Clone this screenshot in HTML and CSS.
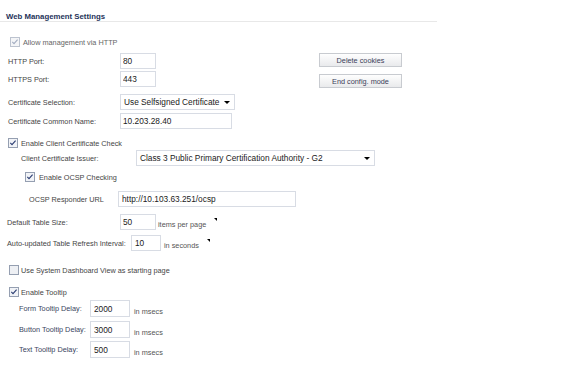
FILE: index.html
```html
<!DOCTYPE html>
<html lang="en">
<head>
  <meta charset="UTF-8" />
  <title>Web Management Settings</title>
  <link rel="stylesheet" href="styles.css">
</head>
<body>
<div class="settings">

  <!-- TITLE -->
  <div class="title">Web Management Settings</div>

  <div class="row check-row mt13 pad10 disabled">
    <svg class="cb" width="10" height="10" viewBox="0 0 10 10"><rect x="0.5" y="0.5" width="9" height="9" fill="#f4f5f7" stroke="#bcc3cf"/><path d="M2.3 4.9 L4 6.6 L7.6 2.6" fill="none" stroke="#a2acc0" stroke-width="1.1"/></svg>
    <span>Allow management via HTTP</span>
  </div>

  <!-- PORTS -->
  <div class="ports mt4">
    <div class="fields">
      <div class="row pad8">
        <span class="lbl w112">HTTP Port:</span>
        <input class="field w-port" value="80" />
      </div>
      <div class="row pad8 mt2">
        <span class="lbl w112">HTTPS Port:</span>
        <input class="field w-port" value="443" />
      </div>
    </div>
    <div class="actions">
      <button class="btn">Delete cookies</button>
      <button class="btn">End config. mode</button>
    </div>
  </div>

  <div class="row pad8 mt6">
    <span class="lbl w112">Certificate Selection:</span>
    <div class="field select w-cert">Use Selfsigned Certificate<span class="arrow"></span></div>
  </div>

  <div class="row pad8 mt3">
    <span class="lbl w112">Certificate Common Name:</span>
    <input class="field w-cn" value="10.203.28.40" />
  </div>

  <!-- CLIENT CERTIFICATE -->
  <div class="row check-row pad8 mt7">
    <svg class="cb" width="10" height="10" viewBox="0 0 10 10"><rect x="0.5" y="0.5" width="9" height="9" fill="#f1f3f7" stroke="#959fb1"/><path d="M2.3 4.9 L4 6.6 L7.6 2.6" fill="none" stroke="#2b3d72" stroke-width="1.1"/></svg>
    <span>Enable Client Certificate Check</span>
  </div>

  <div class="row pad21">
    <span class="lbl w115">Client Certificate Issuer:</span>
    <div class="field select w-issuer">Class 3 Public Primary Certification Authority - G2<span class="arrow"></span></div>
  </div>

  <div class="row check-row pad25 mt4">
    <svg class="cb gap5" width="10" height="10" viewBox="0 0 10 10"><rect x="0.5" y="0.5" width="9" height="9" fill="#f1f3f7" stroke="#959fb1"/><path d="M2.3 4.9 L4 6.6 L7.6 2.6" fill="none" stroke="#2b3d72" stroke-width="1.1"/></svg>
    <span>Enable OCSP Checking</span>
  </div>

  <div class="row pad29 mt7">
    <span class="lbl w89">OCSP Responder URL</span>
    <input class="field w-url" value="http://10.103.63.251/ocsp" />
  </div>

  <!-- TABLES -->
  <div class="row pad7 mt7">
    <span class="lbl w113">Default Table Size:</span>
    <input class="field w-port" value="50" />
    <span class="unit gap2">items per page</span>
    <span class="corner"></span>
  </div>

  <div class="row pad7 mt5">
    <span class="lbl w124">Auto-updated Table Refresh Interval:</span>
    <input class="field w-refresh" value="10" />
    <span class="unit gap3">in seconds</span>
    <span class="corner"></span>
  </div>

  <div class="row check-row pad7 mt12">
    <svg class="cb gap2" width="10" height="10" viewBox="0 0 10 10"><rect x="0.5" y="0.5" width="9" height="9" fill="#eef0f4" stroke="#959fb1"/></svg>
    <span>Use System Dashboard View as starting page</span>
  </div>

  <!-- TOOLTIPS -->
  <div class="row check-row pad7 mt8">
    <svg class="cb gap2" width="10" height="10" viewBox="0 0 10 10"><rect x="0.5" y="0.5" width="9" height="9" fill="#f1f3f7" stroke="#959fb1"/><path d="M2.3 4.9 L4 6.6 L7.6 2.6" fill="none" stroke="#2b3d72" stroke-width="1.1"/></svg>
    <span>Enable Tooltip</span>
  </div>

  <div class="row tip-row pad19 mt1">
    <span class="lbl tip-lbl">Form Tooltip Delay:</span>
    <input class="field w-tip" value="2000" />
    <span class="unit gap4">in msecs</span>
  </div>
  <div class="row tip-row pad19 mt4">
    <span class="lbl tip-lbl">Button Tooltip Delay:</span>
    <input class="field w-tip" value="3000" />
    <span class="unit gap4">in msecs</span>
  </div>
  <div class="row tip-row pad19 mt3">
    <span class="lbl tip-lbl">Text Tooltip Delay:</span>
    <input class="field w-tip" value="500" />
    <span class="unit gap4">in msecs</span>
  </div>

</div>
</body>
</html>
```

FILE: styles.css
```css
body {
  margin: 0;
  font-family: 'Liberation Sans', Arial, sans-serif;
  font-size: 7.3px;
  color: #454545;
  background: #fff;
}
.settings {
  width: 437px;
}
.title {
  height: 22px;
  box-sizing: border-box;
  padding: 12px 0 0 6px;
  line-height: 10px;
  font-size: 7.8px;
  font-weight: bold;
  color: #25335a;
  border-bottom: 1px solid #e8e8e8;
}
.row {
  display: flex;
  align-items: center;
  height: 16px;
}
.check-row { height: 14px; }
.tip-row { height: 17px; }
.disabled { color: #666; }

.cb { flex: none; margin-right: 3px; }
.cb.gap5 { margin-right: 4px; }
.cb.gap2 { margin-right: 2px; }

.lbl { flex: none; }
.w112 { width: 112px; }
.w113 { width: 113px; }
.w115 { width: 115px; }
.w89 { width: 89px; }
.w124 { width: 124px; }
.tip-lbl { width: 71px; color: #3a4560; }

.field {
  box-sizing: border-box;
  height: 100%;
  margin: 0;
  padding: 0 0 0 2px;
  border: 1px solid #d8dce4;
  background: #fff;
  font-family: 'Liberation Sans', Arial, sans-serif;
  font-size: 8.3px;
  color: #1a1a1a;
  outline: none;
}
.select {
  position: relative;
  display: flex;
  align-items: center;
  padding-left: 3px;
}
.arrow {
  position: absolute;
  right: 4px;
  top: 6px;
  border-left: 3px solid transparent;
  border-right: 3px solid transparent;
  border-top: 3px solid #000;
}
.w-port { width: 36px; }
.w-cert { width: 115px; }
.w-cn { width: 112px; }
.w-issuer { width: 239px; }
.w-url { width: 178px; padding-left: 3px; }
.w-refresh { width: 30px; padding-left: 3px; }
.w-tip { width: 40px; padding-left: 3px; }

.unit {
  margin-top: 5px;
  color: #555;
}
.gap2 { margin-left: 2px; }
.gap3 { margin-left: 3px; }
.gap4 { margin-left: 4px; }
.corner {
  align-self: flex-start;
  margin: 4px 0 0 8px;
  border-left: 3px solid transparent;
  border-top: 3px solid #000;
}

.ports {
  display: flex;
}
.actions {
  display: flex;
  flex-direction: column;
  gap: 7px;
  margin-left: 163px;
}
.btn {
  width: 83px;
  height: 14px;
  padding: 0;
  border: 1px solid #c8cbd0;
  background: linear-gradient(#fefefe, #e9eaec);
  font-family: 'Liberation Sans', Arial, sans-serif;
  font-size: 7.3px;
  color: #3a4058;
}

.pad7 { padding-left: 7px; }
.pad8 { padding-left: 8px; }
.pad10 { padding-left: 10px; }
.pad19 { padding-left: 19px; }
.pad21 { padding-left: 21px; }
.pad25 { padding-left: 25px; }
.pad29 { padding-left: 29px; }

.mt1 { margin-top: 1px; }
.mt2 { margin-top: 2px; }
.mt3 { margin-top: 3px; }
.mt4 { margin-top: 4px; }
.mt5 { margin-top: 5px; }
.mt6 { margin-top: 6px; }
.mt7 { margin-top: 7px; }
.mt8 { margin-top: 8px; }
.mt12 { margin-top: 12px; }
.mt13 { margin-top: 13px; }
```
